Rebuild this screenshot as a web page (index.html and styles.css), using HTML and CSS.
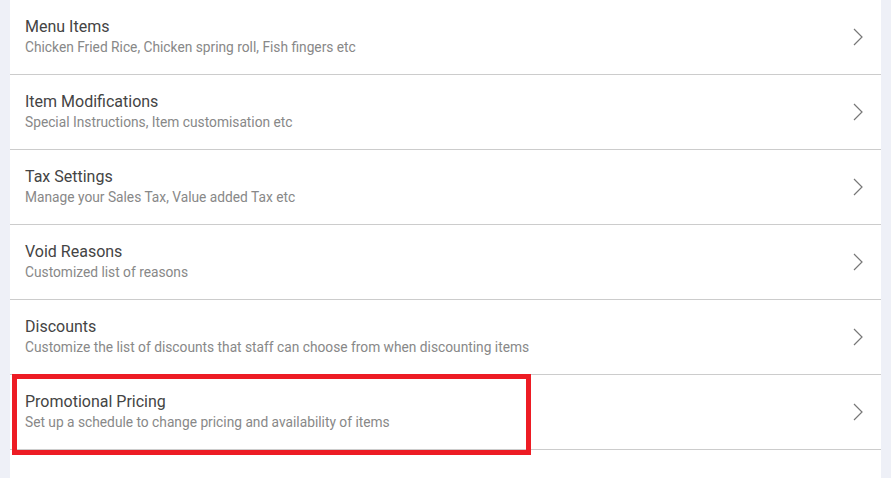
FILE: index.html
```html
<!DOCTYPE html>
<html lang="en">
<head>
    <meta charset="UTF-8">
    <title>Menu Settings</title>
    <link rel="stylesheet" href="styles.css">
</head>
<body>
    <div class="panel">
        <a class="row" href="#">
            <div class="text">
                <div class="title">Menu Items</div>
                <div class="desc">Chicken Fried Rice, Chicken spring roll, Fish fingers etc</div>
            </div>
            <svg class="chevron" viewBox="0 0 10 18"><path d="M1 1l8 8-8 8"/></svg>
        </a>
        <a class="row" href="#">
            <div class="text">
                <div class="title">Item Modifications</div>
                <div class="desc">Special Instructions, Item customisation etc</div>
            </div>
            <svg class="chevron" viewBox="0 0 10 18"><path d="M1 1l8 8-8 8"/></svg>
        </a>
        <a class="row" href="#">
            <div class="text">
                <div class="title">Tax Settings</div>
                <div class="desc">Manage your Sales Tax, Value added Tax etc</div>
            </div>
            <svg class="chevron" viewBox="0 0 10 18"><path d="M1 1l8 8-8 8"/></svg>
        </a>
        <a class="row" href="#">
            <div class="text">
                <div class="title">Void Reasons</div>
                <div class="desc">Customized list of reasons</div>
            </div>
            <svg class="chevron" viewBox="0 0 10 18"><path d="M1 1l8 8-8 8"/></svg>
        </a>
        <a class="row" href="#">
            <div class="text">
                <div class="title">Discounts</div>
                <div class="desc">Customize the list of discounts that staff can choose from when discounting items</div>
            </div>
            <svg class="chevron" viewBox="0 0 10 18"><path d="M1 1l8 8-8 8"/></svg>
        </a>
        <a class="row highlighted" href="#">
            <div class="text">
                <div class="title">Promotional Pricing</div>
                <div class="desc">Set up a schedule to change pricing and availability of items</div>
            </div>
            <svg class="chevron" viewBox="0 0 10 18"><path d="M1 1l8 8-8 8"/></svg>
            <span class="marker"></span>
        </a>
    </div>
</body>
</html>
```

FILE: styles.css
```css
body {
    margin: 0;
    padding: 0 10px;
    background-color: #eef0f7;
    font-family: Roboto, sans-serif;
    height: 478px;
    overflow: hidden;
}
.panel {
    background: #fff;
    height: 478px;
}
.row {
    position: relative;
    display: flex;
    align-items: center;
    height: 74px;
    padding: 0 18px 0 15px;
    border-bottom: 1px solid #cccccc;
    text-decoration: none;
}
.text {
    flex: 1;
}
.title {
    font-size: 16px;
    line-height: 20px;
    color: #444;
}
.desc {
    font-size: 13.75px;
    line-height: 21px;
    color: #888;
}
.chevron {
    width: 10px;
    height: 18px;
    fill: none;
    stroke: #777;
    stroke-width: 1.2;
}
.marker {
    position: absolute;
    left: 2px;
    top: -1px;
    width: 509px;
    height: 71px;
    border: 5px solid #ed1c24;
}
```
